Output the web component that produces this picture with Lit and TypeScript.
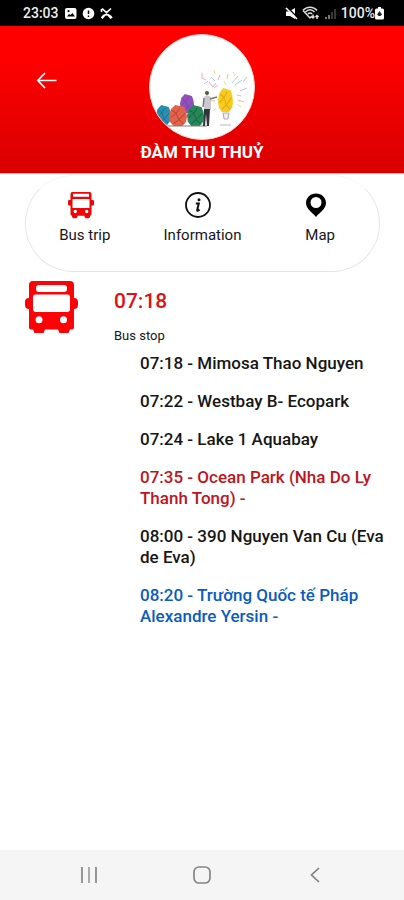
import { LitElement, html, css, svg } from "lit";
import { customElement, property } from "lit/decorators.js";

type Tone = "normal" | "late" | "school";
interface Stop {
  time: string;
  name: string;
  tone: Tone;
}

const STOPS: Stop[] = [
  { time: "07:18", name: "Mimosa Thao Nguyen", tone: "normal" },
  { time: "07:22", name: "Westbay B- Ecopark", tone: "normal" },
  { time: "07:24", name: "Lake 1 Aquabay", tone: "normal" },
  { time: "07:35", name: "Ocean Park (Nha Do Ly Thanh Tong) -", tone: "late" },
  { time: "08:00", name: "390 Nguyen Van Cu (Eva de Eva)", tone: "normal" },
  { time: "08:20", name: "Trường Quốc tế Pháp Alexandre Yersin -", tone: "school" },
];

const smallBus = html`<svg width="26" height="26" viewBox="0 0 26 26" aria-hidden="true">
  <path fill="#ee0508" fill-rule="evenodd" d="M4.500 0h17a2 2 0 0 1 2 2v6h1.200a1.300 1.300 0 0 1 1.300 1.300v3a1.300 1.300 0 0 1-1.300 1.300h-1.200V22a1.800 1.800 0 0 1-1.500 1.800V25l-1.200 1.300h-3L16.500 25v-1.200h-7V25l-1.200 1.300h-3L4 25v-1.200A1.800 1.800 0 0 1 2.500 22v-8.400H1.300A1.300 1.300 0 0 1 0 12.300v-3A1.300 1.300 0 0 1 1.300 8h1.200V2a2 2 0 0 1 2-2zM5 1.800v3h16v-3zM4.500 7v9h17V7zM7.300 17.800a1.700 1.700 0 1 0 0 3.400 1.700 1.700 0 0 0 0-3.400zM18.700 17.800a1.700 1.700 0 1 0 0 3.400 1.700 1.700 0 0 0 0-3.400z"/>
</svg>`;

const largeBus = html`<svg width="53" height="53" viewBox="0 0 53 53" aria-hidden="true">
  <path fill="#fa0408" fill-rule="evenodd" d="M8 0h37a4 4 0 0 1 4 4v13a4 4 0 0 1 4 4v3a4 4 0 0 1-4 4v18.500a2 2 0 0 1-2 2h-2L43.500 52h-9l-1.500-3.500H20L18.500 52h-9L8 48.500H6a2 2 0 0 1-2-2V28a4 4 0 0 1-4-4v-3a4 4 0 0 1 4-4V4a4 4 0 0 1 4-4zM14 4a3 3 0 0 0-3 3v1a3 3 0 0 0 3 3h25a3 3 0 0 0 3-3V7a3 3 0 0 0-3-3zM10.500 13.500A2.500 2.500 0 0 0 8 16v12a3 3 0 0 0 3 3h31a3 3 0 0 0 3-3V16a2.500 2.500 0 0 0-2.500-2.500zM14 35.200a3.500 3.500 0 1 0 0 7 3.500 3.500 0 0 0 0-7zM38.500 35.200a3.500 3.500 0 1 0 0 7 3.500 3.500 0 0 0 0-7z"/>
</svg>`;

const infoIcon = html`<svg width="26" height="26" viewBox="0 0 26 26" aria-hidden="true">
  <circle cx="13" cy="13" r="12" fill="none" stroke="#111" stroke-width="1.800"/>
  <circle cx="14" cy="7.800" r="1.500" fill="#111"/>
  <path d="M10.800 11.500h3l-1.600 6.500c-.2 1 .8 1 2.300-.4" fill="none" stroke="#111" stroke-width="2"/>
</svg>`;

const pinIcon = html`<svg width="26" height="26" viewBox="0 0 26 26" aria-hidden="true">
  <path fill="#000" fill-rule="evenodd" d="M13 1.500c5.700 0 10 4.200 10 9.500 0 6-6.500 9.500-10 14C9.500 20.500 3 17 3 11c0-5.300 4.300-9.500 10-9.500zM13 5a5.500 5.500 0 1 0 0 11 5.500 5.500 0 0 0 0-11z"/>
</svg>`;

/* A cluster of crumpled-paper balls, a presenter and a bright paper bulb. */
const blob = (x: number, y: number, w: number, h: number, fill: string, shade: string) => svg`
  <g transform="translate(${x} ${y}) scale(${w / 20} ${h / 20})">
    <path fill=${fill} d="M2 4L7 0l5 1 5 1 2 4 1 5-1 5-4 4H5l-4-4-1-6z"/>
    <path fill="none" stroke=${shade} stroke-width="1" d="M3 5l5 3 4-5M2 12l6-4 3 6 7-6M5 18l6-4 5 4"/>
  </g>`;

const avatar = html`<svg class="avatar" viewBox="0 0 106 106" role="img" aria-label="Profile picture">
  <defs><clipPath id="disc"><circle cx="53" cy="53" r="52"/></clipPath></defs>
  <circle cx="53" cy="53" r="52.500" fill="#fff" stroke="#ffd0cc" stroke-width="1"/>
  <g clip-path="url(#disc)">
    ${blob(31, 60, 14, 19, "#9350bd", "#7a42a6")}
    ${blob(7, 71, 15, 20, "#2b8fb0", "#1b6f90")}
    ${blob(20, 71, 18, 21, "#e2634a", "#b8483b")}
    ${blob(38, 71, 17, 21, "#28875a", "#176843")}
    <path d="M12 92h46" stroke="#877" stroke-width="1"/>
    <circle cx="58" cy="59" r="2" fill="#554"/>
    <path d="M55 63l3-2 4 2v13h-7z" fill="#c9c9d0"/>
    <path d="M61 65l7-2M55 64l-1 9" stroke="#777" stroke-width="1.400"/>
    <path d="M55 75h6l-1 17h-2l-1-12-1 12h-2z" fill="#33343c"/>
    ${blob(69, 54, 15, 24, "#f7cb20", "#dfa810")}
    <path d="M74 79h6l-1 6h-4z" fill="#eee" stroke="#999" stroke-width=".8"/>
    <path d="M71 91h11" stroke="#bbb" stroke-width="1"/>
    <g fill="none" stroke-width="1" opacity=".75">
      <path stroke="#e98aa5" d="M53 39v5l4 2M60 48l4 5 3-4M71 41l-2 5"/>
      <path stroke="#f0d45c" d="M65 36l1 4M75 47l2 4M84 38l2 4M67 74l-3 3M88 70l4 3"/>
      <path stroke="#85bddb" d="M83 49l6-7M86 51l7-5M62 43l4 4M88 61l4 1"/>
      <path stroke="#b9a0d8" d="M55 50l4-3M91 57l7-3M94 48l4-5M69 51l-4 3"/>
      <path stroke="#f2a27c" d="M89 66l6 2M79 40l-1 5M66 67l-5-1"/>
    </g>
  </g>
</svg>`;

const statusLeft = html`
  <svg width="13" height="13" viewBox="0 0 13 13" aria-hidden="true">
    <path fill="#fff" fill-rule="evenodd" d="M3 1h7.500a2 2 0 0 1 2 2v7a2 2 0 0 1-2 2H3a2 2 0 0 1-2-2V3a2 2 0 0 1 2-2zM3 9.500h8L8.500 6 6.500 8 5 7zM4.500 3a1 1 0 1 0 0 2.200 1 1 0 0 0 0-2.200z"/>
  </svg>
  <svg width="13" height="13" viewBox="0 0 13 13" aria-hidden="true">
    <circle cx="6.500" cy="6.500" r="5.800" fill="#fff"/>
    <path d="M6.500 3.500v3.500M6.500 8.500v1.500" stroke="#000" stroke-width="1.500"/>
  </svg>
  <svg width="13" height="13" viewBox="0 0 13 13" aria-hidden="true">
    <path d="M2 1.500l4.500 4.200L11 1.500M1.500 2v3M1.500 11C4 6.500 9 6.500 12 11M5 8L2 11.500M8 8l3 3.500" fill="none" stroke="#fff" stroke-width="1.600"/>
  </svg>`;

const statusRight = html`
  <svg width="13" height="13" viewBox="0 0 13 13" aria-hidden="true">
    <path fill="#fff" d="M1 4.500h3L10 1v11L5 9H1z"/>
    <path d="M2 0l11 11" stroke="#000" stroke-width="1.500"/>
    <path d="M1 1l11 11" stroke="#fff" stroke-width="1.600"/>
  </svg>
  <svg width="18" height="14" viewBox="0 0 18 14" aria-hidden="true">
    <g fill="none" stroke="#ddd" stroke-width="1.500">
      <path d="M1 4.500C4.500 0 11.500 0 15 4.500M3.500 6c2.500-3 6.500-3 9 0M6 8c1-1.500 3-1.500 4 0"/>
      <path d="M1 4.500L8 12l2-2M11 12V8.500M9.500 10.500L11 12l1.500-1.500M15 13V9.500M13.500 11L15 9.500l1.500 1.500"/>
    </g>
  </svg>
  <svg width="13" height="13" viewBox="0 0 13 13" aria-hidden="true">
    <path fill="#777" d="M1 12v-2h2v2zM4 12V8h2v4z"/>
    <path fill="#383838" d="M7 12V5h2v7zM10 12V2h2v10z"/>
  </svg>`;

const battery = html`<svg width="9" height="13" viewBox="0 0 9 13" aria-hidden="true">
  <path fill="#fff" d="M3 0h3v1.500h1.500A1.500 1.500 0 0 1 9 3v8a1.500 1.500 0 0 1-1.500 1.500h-6A1.500 1.500 0 0 1 0 11V3a1.500 1.500 0 0 1 1.500-1.500H3z"/>
  <path fill="#222" d="M4.500 4L7 7.500 5.500 9h-2L2 7.500z"/>
</svg>`;

@customElement("stop-list")
class StopList extends LitElement {
  @property({ attribute: false }) stops: Stop[] = [];

  static styles = css`
    :host { display: block; }
    .list {
      list-style: none;
      margin: 0;
      padding: 0;
      display: flex;
      flex-direction: column;
      gap: 17px;
      font-size: 17px;
      line-height: 21px;
      font-weight: 500;
    }
    .normal { color: #161616; }
    .late { color: #bd1522; }
    .school { color: #0b5cc0; }
  `;

  render() {
    return html`<ol class="list">
      ${this.stops.map((s) => html`<li class=${s.tone}>${`${s.time} - ${s.name}`}</li>`)}
    </ol>`;
  }
}

@customElement("app-root")
class AppRoot extends LitElement {
  static styles = css`
    :host {
      display: flex;
      flex-direction: column;
      min-height: 100vh;
      background: #fff;
      font-family: Roboto, "Noto Sans", sans-serif;
      color: #161616;
    }
    button {
      border: 0;
      padding: 0;
      background: none;
      color: inherit;
      font: inherit;
    }
    svg { display: block; overflow: visible; }
    .status {
      display: flex;
      justify-content: space-between;
      height: 26px;
      padding: 0 20px 0 23px;
      background: #000;
      color: #eee;
      font-size: 14px;
      font-weight: 500;
    }
    .group { display: flex; align-items: center; gap: 5px; }
    .signals { gap: 4px; }
    .charge { display: flex; align-items: center; }
    .header {
      display: grid;
      grid-template-columns: 1fr auto 1fr;
      padding: 8px 36px 10px;
      background: linear-gradient(#ff0000 20%, #d90000);
      border-bottom: 1px solid #f3a9a4;
      color: #fff;
    }
    .back { justify-self: start; align-self: start; padding: 36px 0; }
    .avatar { width: 106px; height: 106px; }
    .title {
      grid-column: 1 / -1;
      margin: 1px 0 0;
      text-align: center;
      font-size: 17px;
      line-height: 22px;
      font-weight: 700;
    }
    .tabs {
      display: grid;
      grid-template-columns: repeat(3, 1fr);
      margin: 1px 24px 0 25px;
      padding: 16px 0 27px;
      border: 1px solid #e6e6e6;
      border-top-color: #f6f6f6;
      border-radius: 48px;
    }
    .tab {
      display: flex;
      flex-direction: column;
      align-items: center;
      gap: 8px;
      font-size: 15px;
      line-height: 18px;
    }
    .glyph { padding-right: 8px; }
    .trip {
      flex: 1;
      display: grid;
      grid-template-columns: 53px 1fr;
      align-items: start;
      column-gap: 36px;
      padding: 9px 18px 24px 25px;
    }
    .time {
      margin: 7px 0 0;
      font-size: 21px;
      line-height: 26px;
      font-weight: 500;
      color: #dd1016;
    }
    .caption { margin: 14px 0 9px; font-size: 13px; line-height: 16px; }
    .stops { padding-left: 26px; }
    .nav {
      display: grid;
      grid-template-columns: repeat(3, 1fr);
      height: 50px;
      padding: 0 32px;
      background: #f5f5f5;
    }
    .nav button { display: grid; place-items: center; }
  `;

  render() {
    return html`
      <div class="status">
        <div class="group"><span>23:03</span>${statusLeft}</div>
        <div class="group signals">
          ${statusRight}
          <span class="charge"><span>100%</span>${battery}</span>
        </div>
      </div>
      <header class="header">
        <button class="back" aria-label="Back">
          <svg width="21" height="20" viewBox="0 0 21 20" aria-hidden="true">
            <path d="M20.500 10.500H2M9 3L1.800 10.500 9 18" fill="none" stroke="#fff" stroke-width="1.700"/>
          </svg>
        </button>
        ${avatar}
        <h1 class="title">ĐÀM THU THUỶ</h1>
      </header>
      <nav class="tabs">
        <button class="tab"><span class="glyph">${smallBus}</span>Bus trip</button>
        <button class="tab"><span class="glyph">${infoIcon}</span>Information</button>
        <button class="tab"><span class="glyph">${pinIcon}</span>Map</button>
      </nav>
      <main class="trip">
        ${largeBus}
        <section>
          <h2 class="time">07:18</h2>
          <p class="caption">Bus stop</p>
          <stop-list class="stops" .stops=${STOPS}></stop-list>
        </section>
      </main>
      <footer class="nav">
        <button aria-label="Recent apps">
          <svg width="16" height="16" viewBox="0 0 16 16" aria-hidden="true">
            <path d="M1 0v16M15 0v16" stroke="#777" stroke-width="1.500"/>
            <path d="M8 0v16" stroke="#aaa" stroke-width="2"/>
          </svg>
        </button>
        <button aria-label="Home">
          <svg width="18" height="18" viewBox="0 0 18 18" aria-hidden="true">
            <rect x="1" y="1" width="16" height="16" rx="5" fill="none" stroke="#858585" stroke-width="1.700"/>
          </svg>
        </button>
        <button aria-label="Go back">
          <svg width="10" height="16" viewBox="0 0 10 16" aria-hidden="true">
            <path d="M9 1L1.500 8 9 15" fill="none" stroke="#808080" stroke-width="1.700"/>
          </svg>
        </button>
      </footer>
    `;
  }
}
